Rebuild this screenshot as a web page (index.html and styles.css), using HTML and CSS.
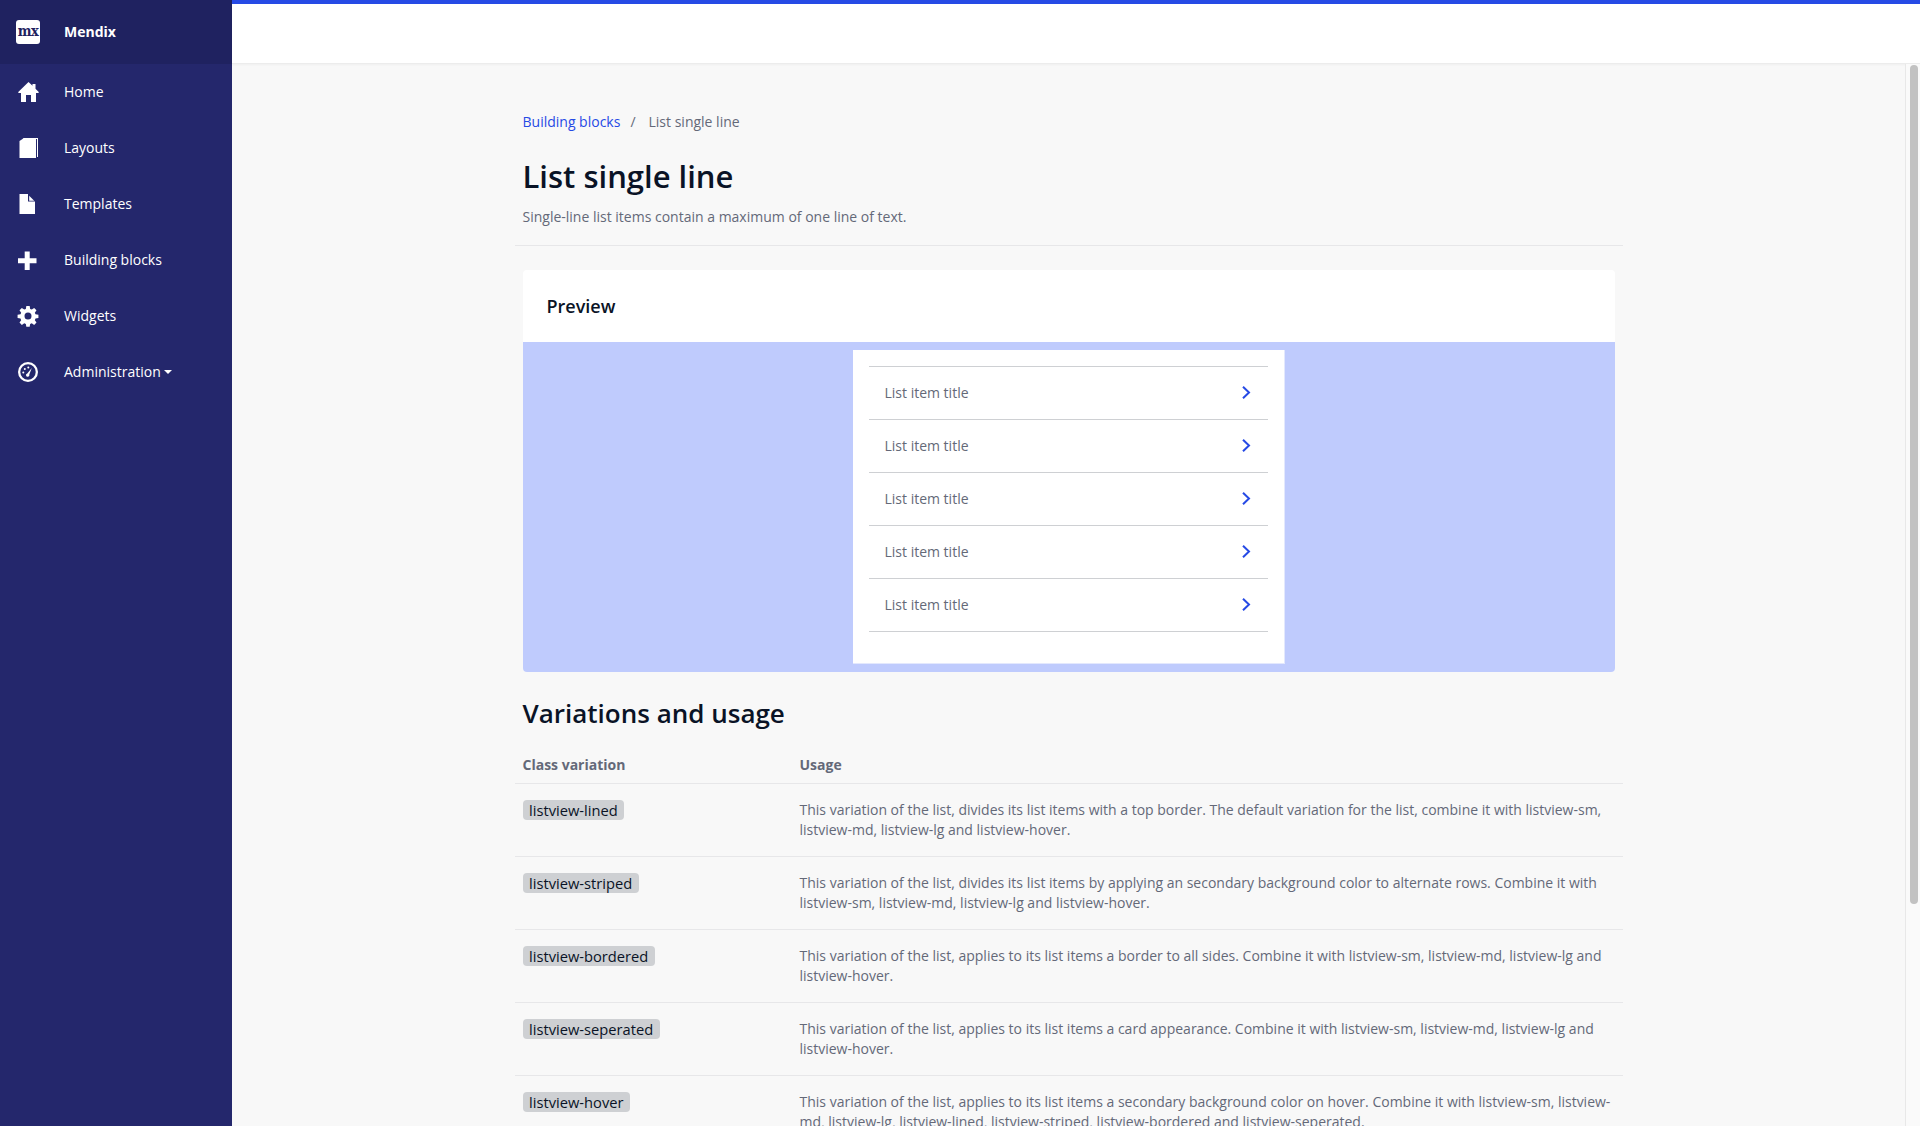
FILE: index.html
```html
<!doctype html>
<html lang="en">
<head>
  <meta charset="UTF-8" />
  <title>List single line</title>
  <link rel="stylesheet" href="styles.css">
</head>
<body>
  <nav class="sidebar">
    <div class="side-brand">
      <span class="logo">mx</span>
      <span>Mendix</span>
    </div>
    <a class="side-item" href="#">
      <svg class="side-icon" viewBox="0 0 24 24"><path d="M12.500 2 2 12.300l.8.700H5v9h5v-7h5v7h5v-9h2.200l.8-.7-3.500-3.500V4h-3v1.800z"/></svg>
      <span>Home</span>
    </a>
    <a class="side-item" href="#">
      <svg class="side-icon" viewBox="0 0 24 24"><path d="M6.500 2H22v19h-1V3H7.500z"/><path d="M3.500 5 6.500 3H20v19H3.500z"/></svg>
      <span>Layouts</span>
    </a>
    <a class="side-item" href="#">
      <svg class="side-icon" viewBox="0 0 24 24"><path d="M3.500 2H12v7.500h7V22H3.500z"/><path d="M13.200 3.700l5 5h-5z"/></svg>
      <span>Templates</span>
    </a>
    <a class="side-item" href="#">
      <svg class="side-icon" viewBox="0 0 24 24"><path d="M8.700 3.500h5v6.700h6.800v5h-6.800V22h-5v-6.800H2v-5h6.700z"/></svg>
      <span>Building blocks</span>
    </a>
    <a class="side-item" href="#">
      <svg class="side-icon" viewBox="-2.400 -2.400 28.800 28.800"><path fill-rule="evenodd" d="M10 0h4l.6 3.500 1.900.8 2.900-2 2.800 2.800-2 2.900.8 1.900 3.500.6v4l-3.500.6-.8 1.900 2 2.900-2.800 2.800-2.900-2-1.900.8-.6 3.500h-4l-.6-3.500-1.900-.8-2.900 2-2.800-2.800 2-2.900-.8-1.900-3.500-.6v-4l3.500-.6.8-1.900-2-2.900 2.800-2.800 2.900 2 1.900-.8zM12 7.800a4.200 4.200 0 1 0 0 8.400 4.200 4.200 0 0 0 0-8.400z"/></svg>
      <span>Widgets</span>
    </a>
    <a class="side-item" href="#">
      <svg class="side-icon" viewBox="0 0 24 24"><path fill-rule="evenodd" d="M12 2a10 10 0 1 0 0 20 10 10 0 0 0 0-20zM12 4.300a7.700 7.700 0 1 1 0 15.400 7.700 7.700 0 0 1 0-15.400z"/><path d="M15.800 8 13.300 14.500a1.700 1.700 0 1 1-2-1.100z"/><circle cx="7.300" cy="12.500" r="1"/><circle cx="8.800" cy="9" r="1"/><circle cx="12.300" cy="7.400" r="1"/></svg>
      <span>Administration</span>
      <span class="caret"></span>
    </a>
  </nav>

  <div class="shell">
    <header class="topbar"></header>
    <div class="body-row">
      <main class="content">
        <div class="container">
          <div class="breadcrumb">
            <a href="#">Building blocks</a>
            <span class="crumb-sep">/</span>
            <span>List single line</span>
          </div>
          <h1>List single line</h1>
          <p class="lead">Single-line list items contain a maximum of one line of text.</p>
          <hr class="rule">

          <section class="card">
            <div class="card-head">Preview</div>
            <div class="preview">
              <ul class="listview">
                <li>List item title <svg class="chev" viewBox="0 0 8.500 13"><path d="M1 .8 7 6.500l-6 5.700"/></svg></li>
                <li>List item title <svg class="chev" viewBox="0 0 8.500 13"><path d="M1 .8 7 6.500l-6 5.700"/></svg></li>
                <li>List item title <svg class="chev" viewBox="0 0 8.500 13"><path d="M1 .8 7 6.500l-6 5.700"/></svg></li>
                <li>List item title <svg class="chev" viewBox="0 0 8.500 13"><path d="M1 .8 7 6.500l-6 5.700"/></svg></li>
                <li>List item title <svg class="chev" viewBox="0 0 8.500 13"><path d="M1 .8 7 6.500l-6 5.700"/></svg></li>
              </ul>
            </div>
          </section>

          <h2>Variations and usage</h2>
          <table class="usage">
            <thead>
              <tr><th>Class variation</th><th>Usage</th></tr>
            </thead>
            <tbody>
              <tr>
                <td><code>listview-lined</code></td>
                <td>This variation of the list, divides its list items with a top border. The default variation for the list, combine it with listview-sm, listview-md, listview-lg and listview-hover.</td>
              </tr>
              <tr>
                <td><code>listview-striped</code></td>
                <td>This variation of the list, divides its list items by applying an secondary background color to alternate rows. Combine it with listview-sm, listview-md, listview-lg and listview-hover.</td>
              </tr>
              <tr>
                <td><code>listview-bordered</code></td>
                <td>This variation of the list, applies to its list items a border to all sides. Combine it with listview-sm, listview-md, listview-lg and listview-hover.</td>
              </tr>
              <tr>
                <td><code>listview-seperated</code></td>
                <td>This variation of the list, applies to its list items a card appearance. Combine it with listview-sm, listview-md, listview-lg and listview-hover.</td>
              </tr>
              <tr>
                <td><code>listview-hover</code></td>
                <td>This variation of the list, applies to its list items a secondary background color on hover. Combine it with listview-sm, listview-md, listview-lg, listview-lined, listview-striped, listview-bordered and listview-seperated.</td>
              </tr>
            </tbody>
          </table>
        </div>
      </main>
      <div class="scrolltrack"><div class="scrollthumb"></div></div>
    </div>
  </div>
</body>
</html>
```

FILE: styles.css
```css
:root {
  --side: #24276c;
  --side-dark: #1f2260;
  --brand: #264ae5;
  --bg: #f8f8f8;
  --title: #0a1326;
  --text: #646978;
  --line: #e7e7e9;
}
* { box-sizing: border-box; }
html, body { height: 100%; }
body {
  margin: 0;
  display: flex;
  height: 1126px;
  overflow: hidden;
  font-family: "Open Sans", sans-serif;
  font-size: 14px;
  line-height: 20px;
  color: var(--text);
  background: var(--bg);
}

.sidebar { width: 232px; flex: none; background: var(--side); color: #fff; }
.side-brand {
  height: 64px;
  display: flex;
  align-items: center;
  padding-left: 16px;
  gap: 24px;
  background: var(--side-dark);
  font-weight: 700;
}
.logo {
  width: 24px;
  height: 24px;
  border-radius: 3px;
  background: #fff;
  color: var(--side-dark);
  font-family: "DejaVu Serif Condensed", "DejaVu Serif", serif;
  font-size: 14.500px;
  font-weight: 700;
  letter-spacing: -.5px;
  text-align: center;
  line-height: 22px;
}
.side-item {
  height: 56px;
  display: flex;
  align-items: center;
  padding-left: 16px;
  color: #fff;
  text-decoration: none;
  font-weight: 500;
}
.side-icon { width: 24px; height: 24px; margin-right: 24px; fill: #fff; flex: none; }
.caret {
  margin-left: 3px;
  border-top: 4px solid #fff;
  border-left: 4px solid transparent;
  border-right: 4px solid transparent;
}

.shell { flex: 1; display: flex; flex-direction: column; min-width: 0; }
.topbar {
  height: 64px;
  flex: none;
  background: #fff;
  border-top: 4px solid var(--brand);
  border-bottom: 1px solid #ececec;
  box-shadow: 0 1px 2px rgba(0,0,0,.04);
}
.body-row { flex: 1; display: flex; min-height: 0; }
.content { flex: 1; min-width: 0; overflow: hidden; }
.container { width: 1108px; margin: 0 auto; padding: 47px 8px 0; }

.scrolltrack {
  width: 15px;
  flex: none;
  padding: 1px 3px 0 4px;
  border-left: 1px solid #e8e8e8;
  background: #fafafa;
}
.scrollthumb { width: 8px; height: 839px; border-radius: 4px; background: #c2c2c2; }

.breadcrumb { display: flex; height: 22px; align-items: center; }
.breadcrumb a { color: var(--brand); text-decoration: none; }
.crumb-sep { margin: 0 13px 0 10px; }
h1 {
  margin: 23px 0 0;
  font-size: 31px;
  line-height: 40px;
  font-weight: 600;
  color: var(--title);
}
.lead { margin: 11px 0 0; }
.rule { margin: 18px -8px 24px; border: 0; border-top: 1px solid var(--line); height: 0; }

.card { background: #fff; border-radius: 4px; }
.card-head {
  height: 72px;
  padding: 0 24px;
  display: flex;
  align-items: center;
  font-size: 18px;
  font-weight: 600;
  color: var(--title);
}
.preview {
  height: 330px;
  padding-top: 8px;
  background: #bfcbfd;
  border-radius: 0 0 4px 4px;
}
.listview {
  width: 432px;
  height: 314px;
  margin: 0 auto;
  padding: 16px 16px 0;
  list-style: none;
  background: #fff;
  border: 1px solid #e3e8fd;
  border-width: 0 1px 1px 0;
}
.listview li {
  height: 53px;
  display: flex;
  align-items: center;
  justify-content: space-between;
  padding: 0 17px 0 16px;
  border-top: 1px solid #ced0d3;
}
.listview li:last-child { height: 54px; border-bottom: 1px solid #ced0d3; }
.chev { width: 8.500px; height: 13px; margin-bottom: 1px; fill: none; stroke: var(--brand); stroke-width: 2; }

h2 {
  margin: 23px 0 0;
  font-size: 26px;
  line-height: 36px;
  font-weight: 600;
  color: var(--title);
}
.usage { width: calc(100% + 16px); margin: 16px -8px 0; border-collapse: collapse; table-layout: fixed; }
.usage th:first-child { width: 277px; }
.usage th {
  height: 36px;
  padding: 8px;
  text-align: left;
  font-weight: 700;
  border-bottom: 1px solid var(--line);
}
.usage td {
  padding: 16px 8px;
  vertical-align: top;
  border-bottom: 1px solid var(--line);
}
code {
  display: block;
  width: max-content;
  padding: 0 6.500px;
  border-radius: 4px;
  background: #ced0d3;
  color: var(--title);
  font-family: "Open Sans", sans-serif;
  font-size: 14.700px;
}
```
